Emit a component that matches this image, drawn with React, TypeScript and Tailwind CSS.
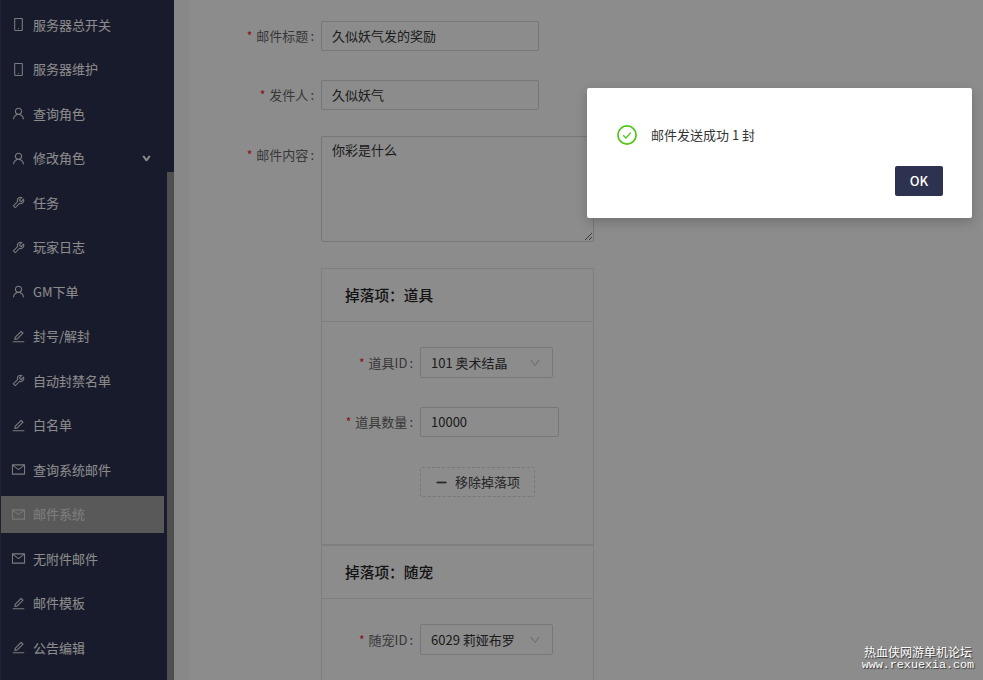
import React from "react";
import {
  AiOutlineMobile,
  AiOutlineUser,
  AiOutlineTool,
  AiOutlineEdit,
  AiOutlineMail,
  AiOutlineDown,
  AiOutlineMinus,
} from "react-icons/ai";

const FONT = "font-['Noto_Sans_CJK_SC','Noto_Sans',sans-serif]";

const items: { icon: React.ComponentType<{ className?: string }>; label: string; active?: boolean; arrow?: boolean }[] = [
  { icon: AiOutlineMobile, label: "服务器总开关" },
  { icon: AiOutlineMobile, label: "服务器维护" },
  { icon: AiOutlineUser, label: "查询角色" },
  { icon: AiOutlineUser, label: "修改角色", arrow: true },
  { icon: AiOutlineTool, label: "任务" },
  { icon: AiOutlineTool, label: "玩家日志" },
  { icon: AiOutlineUser, label: "GM下单" },
  { icon: AiOutlineEdit, label: "封号/解封" },
  { icon: AiOutlineTool, label: "自动封禁名单" },
  { icon: AiOutlineEdit, label: "白名单" },
  { icon: AiOutlineMail, label: "查询系统邮件" },
  { icon: AiOutlineMail, label: "邮件系统", active: true },
  { icon: AiOutlineMail, label: "无附件邮件" },
  { icon: AiOutlineEdit, label: "邮件模板" },
  { icon: AiOutlineEdit, label: "公告编辑" },
];

function Label({ text, className }: { text: string; className: string }) {
  return (
    <div className={`shrink-0 flex justify-end items-center h-[30px] text-[13px] text-[#666666] ${className}`}>
      <span className="text-[#f5222d] mr-[4px] text-[12px] leading-none">*</span>
      <span>{text}</span>
      <span className="ml-[2px] mr-[1px]">:</span>
    </div>
  );
}

function Field({ value, className }: { value: string; className: string }) {
  return (
    <div className={`h-[30px] border border-[#d9d9d9] rounded-[2px] pl-[10px] flex items-center text-[13px] text-[#333333] ${className}`}>
      {value}
    </div>
  );
}

function SelectBox({ value }: { value: string }) {
  return (
    <div className="h-[31px] w-[133px] border border-[#d9d9d9] rounded-[2px] pl-[10px] pr-[11px] flex items-center justify-between text-[13px] text-[#333333]">
      <span>{value}</span>
      <AiOutlineDown className="text-[#c4c4c4] text-[12px]" />
    </div>
  );
}

function DropCard({ title, children }: { title: string; children: React.ReactNode }) {
  return (
    <section className="w-[273px] ml-[132px] border border-[#e8e8e8]">
      <header className="h-[53px] border-b border-[#e8e8e8] pl-[23px] flex items-center text-[14.7px] font-medium text-[#262626]">
        {title}
      </header>
      <div className="pt-[25px] flex flex-col">{children}</div>
    </section>
  );
}

export default function App() {
  return (
    <div className={`relative w-[983px] h-[680px] overflow-hidden flex bg-white ${FONT}`}>
      {/* Sidebar */}
      <aside className="w-[174px] h-full shrink-0 flex bg-[#2d3250] overflow-hidden border-l border-[#3a3f5c]">
        <nav className="w-[166px] pt-[6px] flex flex-col">
          {items.map((it) => {
            const Icon = it.icon;
            return (
              <div
                key={it.label}
                className={`h-[37px] shrink-0 mb-[7.5px] w-[163px] pl-[10px] pr-[13px] flex items-center text-[13px] ${
                  it.active ? "bg-[#a3a3a3] text-[#e4e4e4]" : "text-[#ffffff]"
                }`}
              >
                <Icon className="text-[15px] mr-[7px] shrink-0 opacity-85" />
                <span className="flex-1">{it.label}</span>
                {it.arrow && <AiOutlineDown className="text-[9px] stroke-[140]" />}
              </div>
            );
          })}
        </nav>
        <div className="w-[7px] h-full pt-[172px]">
          <div className="h-full bg-[#909090]" />
        </div>
      </aside>

      {/* Gutter */}
      <div className="w-[15px] h-full shrink-0 bg-[#f8f8f8]" />

      {/* Content */}
      <main className="flex-1 h-full pt-[21px] flex flex-col overflow-hidden">
        <div className="flex items-start gap-[6px] mb-[29px]">
          <Label text="邮件标题" className="w-[126px]" />
          <Field value="久似妖气发的奖励" className="w-[218px]" />
        </div>
        <div className="flex items-start gap-[6px] mb-[26px]">
          <Label text="发件人" className="w-[126px]" />
          <Field value="久似妖气" className="w-[218px]" />
        </div>
        <div className="flex items-start gap-[6px] mb-[26px]">
          <Label text="邮件内容" className="w-[126px] mt-[4px]" />
          <textarea
            readOnly
            defaultValue="你彩是什么"
            className="w-[273px] h-[106px] border border-[#d9d9d9] rounded-[2px] px-[10px] py-[3px] text-[13px] text-[#333333] outline-none resize-y"
          />
        </div>

        <DropCard title="掉落项：道具">
          <div className="flex items-center gap-[6px] mb-[29px]">
            <Label text="道具ID" className="w-[92px]" />
            <SelectBox value="101 奥术结晶" />
          </div>
          <div className="flex items-center gap-[6px] mb-[30px]">
            <Label text="道具数量" className="w-[92px]" />
            <Field value="10000" className="w-[139px]" />
          </div>
          <div className="ml-[98px] mb-[47px] h-[30px] w-[115px] border border-dashed border-[#d9d9d9] rounded-[2px] flex items-center justify-center gap-[7px] text-[13px] text-[#444444]">
            <AiOutlineMinus className="text-[13px] stroke-[60]" />
            <span>移除掉落项</span>
          </div>
        </DropCard>

        <DropCard title="掉落项：随宠">
          <div className="flex items-center gap-[6px] mb-[29px]">
            <Label text="随宠ID" className="w-[92px]" />
            <SelectBox value="6029 莉娅布罗" />
          </div>
        </DropCard>
      </main>

      {/* Overlay */}
      <div className="absolute inset-0 bg-black/45" />

      {/* Modal */}
      <div className="absolute left-[587px] top-[88px] w-[385px] h-[130px] bg-white rounded-[2px] shadow-[0_4px_12px_rgba(0,0,0,0.2)] pt-[37px] pl-[30px] pr-[29px] flex flex-col">
        <div className="flex items-center h-[20px]">
          <svg width="20" height="20" viewBox="0 0 20 20" fill="none" className="shrink-0">
            <circle cx="10" cy="10" r="9.1" stroke="#52c41a" strokeWidth="1.7" />
            <path d="M6.2 10.2 L9 13 L13.8 7.6" stroke="#52c41a" strokeWidth="1.3" />
          </svg>
          <span className="ml-[14px] -mt-[1px] text-[13px] text-[#333333]">邮件发送成功 1 封</span>
        </div>
        <div className="mt-[21px] flex justify-end">
          <div className="w-[48px] h-[30px] bg-[#2d3250] rounded-[2px] flex items-center justify-center text-white text-[13px] font-medium">
            OK
          </div>
        </div>
      </div>

      {/* Watermark */}
      <div className="absolute right-[9px] bottom-[9px] flex flex-col items-center text-white [text-shadow:1px_1px_1px_#333]">
        <div className="text-[12px] leading-[14px] h-[14px]">热血侠网游单机论坛</div>
        <div className="text-[11.7px] leading-[12px] h-[12px] font-['Liberation_Mono',monospace]">www.rexuexia.com</div>
      </div>
    </div>
  );
}
